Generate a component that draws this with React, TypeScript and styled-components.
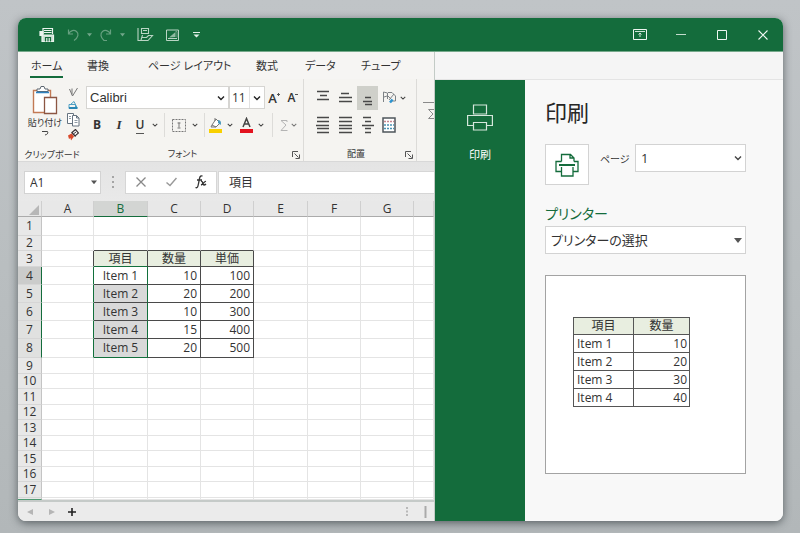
import React from "react";
import styled, { createGlobalStyle } from "styled-components";

const GREEN = "#146c3c";
const INK = "#333";

const GlobalStyle = createGlobalStyle`
  *, *::before, *::after { box-sizing: border-box; }
  body {
    margin: 0;
    font-family: "Open Sans", "Noto Sans CJK JP", sans-serif;
    font-feature-settings: "palt";
    color: ${INK};
  }
  button, select, input { font: inherit; font-feature-settings: inherit; color: inherit; margin: 0; }
  svg { display: block; flex: none; }
`;

const Desktop = styled.div`
  min-height: 100vh;
  padding: 18px 17px 12px 18px;
  background: linear-gradient(#c0c4c7, #b9bec0 50%, #b2b7b9);
`;

const AppWindow = styled.div`
  display: flex;
  flex-direction: column;
  border-radius: 8px;
  overflow: hidden;
  background: #f7f7f7;
  box-shadow: 0 2px 9px rgba(40, 48, 52, 0.65);
`;

const TitleBar = styled.header`
  display: flex;
  justify-content: space-between;
  height: 34px;
  padding-left: 16px;
  background: ${GREEN};
  border-bottom: 1px solid #76a98b;
  color: #e2efe7;
`;

const BarGroup = styled.div`
  display: flex;
`;

const IconButton = styled.button<{ $w: number; $active?: boolean; $dim?: boolean }>`
  display: flex;
  flex: none;
  align-items: center;
  justify-content: center;
  width: ${(p) => p.$w}px;
  height: 100%;
  padding: 0;
  border: 0;
  background: ${(p) => (p.$active ? "#cfd0ca" : "transparent")};
  opacity: ${(p) => (p.$dim ? 0.4 : 1)};
`;

const Body = styled.div`
  display: flex;
`;

const Workbook = styled.main`
  flex: 1 1 0;
  min-width: 0;
  display: flex;
  flex-direction: column;
  overflow: hidden;
  border-right: 1px solid #c3cbc6;
`;

const Tabs = styled.nav`
  display: grid;
  grid-template-columns: 56px 61px 108px 49px 56px auto;
  justify-content: start;
  height: 27px;
  padding-left: 12px;
  background: #f6f5f3;
`;

const Tab = styled.button<{ $active?: boolean }>`
  justify-self: start;
  height: 26px;
  padding: 3px 1px 0;
  border: 0;
  border-bottom: 2px solid ${(p) => (p.$active ? GREEN : "transparent")};
  background: none;
  font-size: 11px;
  line-height: 20px;
  white-space: nowrap;
`;

const Ribbon = styled.div`
  display: flex;
  height: 83px;
  background: #f5f4f1;
  border-bottom: 1px solid #d8d8d8;
  overflow: hidden;
`;

const Group = styled.section<{ $w: number; $rule?: boolean }>`
  position: relative;
  flex: none;
  display: flex;
  flex-direction: column;
  width: ${(p) => p.$w}px;
  padding-top: 7px;
  border-right: ${(p) => (p.$rule ? "1px solid #dcdbd8" : "0")};
`;

const Tools = styled.div<{ $h: number; $left?: number }>`
  display: flex;
  align-items: center;
  height: ${(p) => p.$h}px;
  padding-left: ${(p) => p.$left || 0}px;
`;

const GroupFooter = styled.div<{ $shift?: number }>`
  display: flex;
  align-items: center;
  justify-content: center;
  height: 14px;
  margin-top: 6px;
  padding-right: ${(p) => p.$shift || 0}px;
  font-size: 9px;
  line-height: 14px;
  white-space: nowrap;
`;

const Launcher = styled.button`
  position: absolute;
  right: 3px;
  bottom: 2px;
  padding: 0;
  border: 0;
  background: none;
`;

const Rule = styled.span<{ $w: number }>`
  display: flex;
  flex: none;
  justify-content: center;
  width: ${(p) => p.$w}px;
  &::before { content: ""; width: 1px; height: 24px; background: #dddcd9; }
`;

const Glyph = styled.span<{ $size?: number; $bold?: boolean; $italic?: boolean; $under?: boolean }>`
  font-size: ${(p) => p.$size || 12}px;
  line-height: 16px;
  font-weight: ${(p) => (p.$bold ? 700 : 600)};
  font-style: ${(p) => (p.$italic ? "italic" : "normal")};
  font-family: ${(p) => (p.$italic ? '"Liberation Serif", serif' : "inherit")};
  border-bottom: ${(p) => (p.$under ? "1px solid #555" : "0")};
`;

const PasteButton = styled.button`
  display: flex;
  flex-direction: column;
  align-items: center;
  width: 34px;
  padding: 0;
  border: 0;
  background: none;
  font-size: 9px;
  line-height: 14px;
  white-space: nowrap;
`;

const ClipboardTools = styled.div`
  display: flex;
  height: 56px;
  padding-left: 10px;
`;

const SmallStack = styled.div`
  display: grid;
  grid-template-rows: 12px 14px 16px 14px;
  width: 22px;
`;

const SelectBox = styled.span<{ $w?: string; $h: number; $line: string; $size: number }>`
  position: relative;
  display: flex;
  flex: ${(p) => (p.$w ? "none" : "1")};
  min-width: 0;
  width: ${(p) => p.$w || "auto"};
  height: ${(p) => p.$h}px;
  border: 1px solid ${(p) => p.$line};
  background: #fff;
  font-size: ${(p) => p.$size}px;
  & > select {
    width: 100%;
    padding: 0 0 0 5px;
    border: 0;
    appearance: none;
    background: transparent;
  }
  & > svg { position: absolute; right: 3px; top: 50%; translate: 0 -50%; pointer-events: none; }
`;

const LatinSelectBox = styled(SelectBox)`
  font-family: "Liberation Sans", sans-serif;
  & > select { padding-left: 3px; }
`;

const SizeSelectBox = styled(SelectBox)`
  & > select { padding-left: 2px; }
  &::after { content: ""; position: absolute; right: 14px; top: 0; bottom: 0; width: 1px; background: #e2e2e2; }
`;

const FormulaBar = styled.div`
  display: flex;
  align-items: center;
  height: 39px;
  padding: 1px 0 0 6px;
  background: linear-gradient(#e4e4e4, #e9e9e9);
`;

const FormulaTools = styled.div`
  display: flex;
  flex: none;
  width: 92px;
  height: 23px;
  border: 1px solid #d6d6d6;
  background: #fff;
`;

const DotsSlot = styled.span`
  display: flex;
  flex: none;
  justify-content: center;
  width: 24px;
`;

const FormulaInput = styled.input`
  flex: 1;
  min-width: 0;
  height: 23px;
  margin-left: 1px;
  padding: 0 10px;
  border: 1px solid #d6d6d6;
  border-right: 0;
  background: #fff;
  font-size: 12px;
`;

const SheetViewport = styled.div`
  overflow: hidden;
  background: #fff;
`;

const Sheet = styled.table`
  width: 100%;
  table-layout: fixed;
  border-collapse: separate;
  border-spacing: 0;
  font-size: 12px;
  line-height: 14px;
`;

const SheetRow = styled.tr<{ $h: number }>`
  height: ${(p) => p.$h}px;
`;

const Col = styled.col<{ $w?: number }>`
  width: ${(p) => (p.$w ? `${p.$w}px` : "auto")};
`;

const ColHead = styled.th<{ $on?: boolean }>`
  padding: 1px 0 0;
  font-weight: 400;
  color: ${(p) => (p.$on ? GREEN : INK)};
  background: ${(p) => (p.$on ? "#d3d5d3" : "#e8e8e8")};
  border-right: 1px solid #cfcfcf;
  border-bottom: 1px solid ${(p) => (p.$on ? GREEN : "#ababab")};
`;

const Corner = styled(ColHead)`
  & > svg { margin: 2px 2px 0 auto; }
`;

const RowHead = styled.th<{ $on?: boolean; $current?: boolean; $end?: boolean }>`
  padding: 0;
  font-weight: 400;
  background: ${(p) => (p.$current ? "#cbcccb" : p.$on ? "#e0e1e0" : "#e8e8e8")};
  border-right: 1px solid ${(p) => (p.$on ? GREEN : "#c4c4c4")};
  border-bottom: 1px solid ${(p) => (p.$end ? "#4f9a72" : "#d6d6d6")};
`;

const lineColor = { none: "#e4e4e4", dark: "#4a4a4a", green: "#12703c" };
type Line = keyof typeof lineColor;

const Cell = styled.td<{ $right: Line; $bottom: Line; $fill: string; $align: string }>`
  padding: 0 3px;
  text-align: ${(p) => p.$align};
  white-space: nowrap;
  background: ${(p) => p.$fill};
  border-right: 1px solid ${(p) => lineColor[p.$right]};
  border-bottom: 1px solid ${(p) => lineColor[p.$bottom]};
`;

const SheetTabs = styled.footer`
  display: flex;
  align-items: center;
  height: 21px;
  padding: 0 0 0 1px;
  background: #ebebeb;
  border-top: 2px solid #c5cac8;
`;

const Spacer = styled.span`
  flex: 1;
`;

const Side = styled.div`
  flex: 0 1 348px;
  display: flex;
  flex-direction: column;
`;

const SideTop = styled.div`
  height: 28px;
  background: #f5f5f5;
  border-bottom: 1px solid #e4e4e4;
`;

const SideBody = styled.div`
  flex: 1;
  display: flex;
`;

const Backstage = styled.nav`
  flex: 0 0 90px;
  background: ${GREEN};
`;

const BackstageItem = styled.button`
  display: flex;
  flex-direction: column;
  align-items: center;
  gap: 15px;
  width: 100%;
  padding: 24px 0 0;
  border: 0;
  background: none;
  color: #fff;
  font-size: 11px;
  line-height: 16px;
`;

const PrintPane = styled.section`
  flex: 1;
  min-width: 0;
  padding: 16px 37px 0 20px;
  background: #f8f8f8;
`;

const PaneTitle = styled.h1`
  margin: 0;
  font-size: 22px;
  font-weight: 400;
  line-height: 32px;
  color: #262626;
`;

const PrintRow = styled.div`
  display: flex;
  align-items: flex-start;
  margin-top: 16px;
`;

const PrintButton = styled.button`
  display: flex;
  align-items: center;
  justify-content: center;
  width: 44px;
  height: 41px;
  padding: 0;
  border: 1px solid #d3d3d3;
  background: #fff;
`;

const PageLabel = styled.label`
  width: 46px;
  padding-left: 11px;
  font-size: 10px;
  line-height: 30px;
  white-space: nowrap;
`;

const PrinterLabel = styled.label`
  display: block;
  margin-top: 16px;
  font-size: 14px;
  line-height: 25px;
  color: ${GREEN};
`;

const Preview = styled.div`
  margin-top: 21px;
  height: 199px;
  padding: 41px 55px 0 27px;
  border: 1px solid #a3a3a3;
  background: #fff;
`;

const PreviewTable = styled.table`
  width: 100%;
  table-layout: fixed;
  border-collapse: separate;
  border-spacing: 0;
  border-top: 1px solid #555;
  border-left: 1px solid #555;
  font-size: 12px;
  line-height: 14px;
  & thead tr { height: 17px; }
  & tbody tr { height: 18px; }
  & th { background: #e8eee0; font-weight: 400; padding: 0; }
  & th:first-child { width: 60px; }
  & td, & th { border-right: 1px solid #555; border-bottom: 1px solid #555; }
  & td { padding: 0 2px 0 3px; }
  & td + td { text-align: right; }
`;

const Chevron = ({ size = 7, color = "#444" }: { size?: number; color?: string }) => (
  <svg width={size} height={size} viewBox="0 0 8 8" fill="none" stroke={color} strokeWidth="1.4">
    <path d="M1 2.5 4 5.5 7 2.5" />
  </svg>
);

const Triangle = ({ w = 8, color = "#555" }: { w?: number; color?: string }) => (
  <svg width={w} height={w} viewBox="0 0 8 8" fill={color}>
    <path d="M0 2h8L4 7z" />
  </svg>
);

const Lines = ({ rows }: { rows: [number, number, number][] }) => (
  <svg width="16" height="18" viewBox="0 0 16 18" stroke="#484848" strokeWidth="1.4">
    {rows.map(([a, b, y]) => (
      <path key={y} d={`M${a} ${y}H${b}`} />
    ))}
  </svg>
);

const LauncherIcon = () => (
  <svg width="8" height="8" viewBox="0 0 8 8" fill="none" stroke="#555">
    <path d="M.5 6V.5H6M2.5 2.5l4 4M7.5 3.500v4h-4" />
  </svg>
);

const VerticalDots = () => (
  <svg width="3" height="12" viewBox="0 0 3 12" fill="#a5a5a5">
    <path d="M0 0h2v2H0zM0 5h2v2H0zM0 10h2v2H0z" />
  </svg>
);

const SplitDots = () => (
  <svg width="3" height="9" viewBox="0 0 3 9" fill="#b9b9b9">
    <path d="M0 0h2v2H0zM0 3.500h2v2H0zM0 7h2v2H0z" />
  </svg>
);

const QuickAccess = () => (
  <BarGroup>
    <IconButton $w={26} aria-label="印刷">
      <svg width="16" height="16" viewBox="0 0 16 16" fill="none" stroke="#eaf4ee" strokeWidth="1.2">
        <path d="M4 7V1.500h9.500V7M5 3.500h7.500M5 5.500h7.500" />
        <path d="M1 4.500h3v4H1z" fill="#eaf4ee" />
        <path d="M3 8h11.500v6.500H3z" fill="#cfe3d7" />
        <path d="M6.500 14.500v-4h5v4M9 10.500v4" stroke={GREEN} />
      </svg>
    </IconButton>
    <IconButton $w={26} $dim aria-label="元に戻す">
      <svg width="13" height="14" viewBox="0 0 13 14" fill="none" stroke="currentColor" strokeWidth="1.200">
        <path d="M1.500 1.500v4.500H6M1.500 6C3.500 2.500 7 1.500 9.500 3.500s2 6-2.500 9" />
      </svg>
    </IconButton>
    <IconButton $w={6} $dim aria-label="元に戻す一覧"><Triangle w={5} color="#fff" /></IconButton>
    <IconButton $w={26} $dim aria-label="やり直し">
      <svg width="13" height="14" viewBox="0 0 13 14" fill="none" stroke="currentColor" strokeWidth="1.200">
        <path d="M11.500 1.500v4.500H7M11.500 6C9.500 2.500 6 1.500 3.500 3.500s-2 6 1.500 9h3" />
      </svg>
    </IconButton>
    <IconButton $w={8} $dim aria-label="やり直し一覧"><Triangle w={5} color="#fff" /></IconButton>
    <IconButton $w={38} aria-label="プレビュー">
      <svg width="17" height="15" viewBox="0 0 17 15" fill="none" stroke="#b9d5c4" strokeWidth="1.100">
        <path d="M1 1v12.500h10l4.500-5h-4l-2 2H5M4.500 1.500h7v5h-7zM4 13l1.500-5" />
        <path d="M6 3.500h4" />
      </svg>
    </IconButton>
    <IconButton $w={16} aria-label="画像">
      <svg width="13" height="12" viewBox="0 0 13 12" fill="none" stroke="#b9d5c4">
        <path d="M.5 1h12v10.500H.5zM2 9.500h9" />
        <path d="M3 8.500 9.500 3v5z" fill="#8fbaa0" stroke="none" />
        <path d="M9.500 2.500h1.500v6" stroke="#6ea284" />
      </svg>
    </IconButton>
    <IconButton $w={32} aria-label="カスタマイズ">
      <svg width="7" height="6" viewBox="0 0 7 6" fill="#e2efe7">
        <path d="M0 0h7v1H0zM.5 2.500h6L3.500 5.500z" />
      </svg>
    </IconButton>
  </BarGroup>
);

const WindowControls = () => (
  <BarGroup>
    <IconButton $w={41} aria-label="リボンの表示">
      <svg width="14" height="11" viewBox="0 0 14 11" fill="none" stroke="#cfe3d7">
        <path d="M.5 .5h13v10H.5z" stroke="#eef6f1" />
        <path d="M2 2.500h10M7 8V4M5.500 5.500 7 4l1.500 1.500" />
      </svg>
    </IconButton>
    <IconButton $w={41} aria-label="最小化">
      <svg width="10" height="3" viewBox="0 0 10 3" stroke="#c4dccd"><path d="M0 1.500h10" /></svg>
    </IconButton>
    <IconButton $w={41} aria-label="最大化">
      <svg width="10" height="10" viewBox="0 0 10 10" fill="none" stroke="#eef6f1"><path d="M.5 .5h9v9h-9z" /></svg>
    </IconButton>
    <IconButton $w={41} aria-label="閉じる">
      <svg width="10" height="10" viewBox="0 0 10 10" stroke="#eef6f1" strokeWidth="1.100"><path d="m.5 .5 9 9M9.500 .5l-9 9" /></svg>
    </IconButton>
  </BarGroup>
);

const ClipboardGroup = () => (
  <Group $w={68}>
    <ClipboardTools>
      <PasteButton>
        <svg width="26" height="30" viewBox="0 0 26 30" fill="none">
          <path d="M1.500 4.500h17v22h-17z" fill="#fff" stroke="#c27a55" strokeWidth="1.400" />
          <path d="M5 5.500V3h3l1-2.500h3L13 3h3v2.500z" fill="#fff" stroke="#5c6670" />
          <path d="M4 6.500h13" stroke="#2f82c0" strokeWidth="1.400" />
          <path d="M12.500 11.500h12v16h-12z" fill="#fff" stroke="#8c5643" strokeWidth="1.300" />
        </svg>
        貼り付け
        <svg width="8" height="6" viewBox="0 0 8 6" fill="none" stroke="#444"><path d="M1 1.500h5.500c1 2-.5 3-2.500 3.500" /></svg>
      </PasteButton>
      <SmallStack>
        <IconButton $w={22} aria-label="切り取り">
          <svg width="9" height="9" viewBox="0 0 9 9" fill="none" stroke="#777"><path d="M.5 1 3.500 8 8.500 0M3 .5v6" /></svg>
        </IconButton>
        <IconButton $w={22} aria-label="貼り付けオプション">
          <svg width="10" height="9" viewBox="0 0 10 9" fill="none" stroke="#4fa0c4">
            <path d="M1 3.500h6.500v4H1zM3 3 6 .5l3 6" /><path d="M1 7h8.500" stroke="#2a87b5" strokeWidth="2" />
          </svg>
        </IconButton>
        <IconButton $w={22} aria-label="コピー">
          <svg width="13" height="14" viewBox="0 0 13 14" fill="#fff" stroke="#667380">
            <path d="M.5 .5h6v10h-6z" /><path d="M5.500 2.500h4l2.500 2.500v8H5.500zM9.500 2.500V5H12" /><path d="M7.500 7.500h3M7.500 9.500h3M2 3.500h2M2 5.500h2" stroke="#8f9aa5" />
          </svg>
        </IconButton>
        <IconButton $w={22} aria-label="書式のコピー">
          <svg width="12" height="12" viewBox="0 0 12 12" fill="none">
            <path d="M5 3.500 8.500 .5 11.500 4 8 7z" fill="#fff" stroke="#3b3033" strokeWidth="1.200" />
            <path d="m4.500 4 4 3.500M7 4.500l2-1.500" stroke="#3b3033" />
            <path d="M1 6.500 4.500 4.500 7 7.500 4 11.500l-.5-2.500-1.500 1z" fill="#d94a2c" />
          </svg>
        </IconButton>
      </SmallStack>
    </ClipboardTools>
    <GroupFooter>クリップボード</GroupFooter>
  </Group>
);

const FontGroup = () => (
  <Group $w={218} $rule>
    <Tools $h={24}>
      <LatinSelectBox $w="143px" $h={23} $line="#d6d5d2" $size={13}>
        <select aria-label="フォント名"><option>Calibri</option></select>
        <Chevron size={8} color="#222" />
      </LatinSelectBox>
      <SizeSelectBox $w="36px" $h={23} $line="#d6d5d2" $size={12}>
        <select aria-label="フォント サイズ"><option>11</option></select>
        <Chevron size={8} color="#222" />
      </SizeSelectBox>
      <IconButton $w={19} aria-label="拡大">
        <Glyph $size={13}>A</Glyph>
        <svg width="4" height="12" viewBox="0 0 4 12" stroke="#555"><path d="M0 2.500h3M1.500 1v3" /></svg>
      </IconButton>
      <IconButton $w={19} aria-label="縮小">
        <Glyph $size={12}>A</Glyph>
        <svg width="4" height="12" viewBox="0 0 4 12" stroke="#555"><path d="M0 2.500h3" /></svg>
      </IconButton>
    </Tools>
    <Tools $h={32}>
      <IconButton $w={22} aria-label="太字"><Glyph $bold $size={12}>B</Glyph></IconButton>
      <IconButton $w={22} aria-label="斜体"><Glyph $italic $size={13}>I</Glyph></IconButton>
      <IconButton $w={20} aria-label="下線"><Glyph $under $size={12}>U</Glyph></IconButton>
      <IconButton $w={10} aria-label="下線の種類"><Chevron size={6} /></IconButton>
      <Rule $w={9} />
      <IconButton $w={20} aria-label="罫線">
        <svg width="14" height="13" viewBox="0 0 14 13" fill="none" stroke="#777">
          <path d="M.5 .5h13v12H.5z" strokeDasharray="2 1" /><path d="M7 3.500v5M5.500 4h3M5.500 9h3" />
        </svg>
      </IconButton>
      <IconButton $w={12} aria-label="罫線の種類"><Chevron size={6} /></IconButton>
      <Rule $w={7} />
      <IconButton $w={16} aria-label="塗りつぶし">
        <svg width="14" height="16" viewBox="0 0 14 16" fill="none">
          <path d="M3 8 7 2l4 4-4 4z" fill="#fff" stroke="#777" /><path d="M6 4V1M3 8l-1 2h5" stroke="#777" />
          <path d="M9 3c3 0 3.500 3 2.500 5L9 6z" fill="#4796ba" /><path d="M0 12h13v4H0z" fill="#f8d000" />
        </svg>
      </IconButton>
      <IconButton $w={12} aria-label="塗りつぶしの色"><Chevron size={6} /></IconButton>
      <IconButton $w={20} aria-label="文字色">
        <svg width="13" height="16" viewBox="0 0 13 16" fill="none">
          <path d="M3 10 6.500 1.500 10 10M4.500 7h4" stroke="#444" strokeWidth="1.500" /><path d="M0 12h13v4H0z" fill="#e3131f" />
        </svg>
      </IconButton>
      <IconButton $w={9} aria-label="文字色の一覧"><Chevron size={6} /></IconButton>
      <Rule $w={14} />
      <IconButton $w={9} aria-label="合計">
        <svg width="8" height="11" viewBox="0 0 8 11" fill="none" stroke="#b4b4b4"><path d="M7 2V.5H1L6 5 1 10.500h6.500" /></svg>
      </IconButton>
      <IconButton $w={12} aria-label="合計の種類"><Chevron size={6} color="#777" /></IconButton>
    </Tools>
    <GroupFooter $shift={24}>フォント</GroupFooter>
    <Launcher aria-label="フォントの設定"><LauncherIcon /></Launcher>
  </Group>
);

const AlignGroup = () => (
  <Group $w={113} $rule>
    <Tools $h={24} $left={9}>
      <IconButton $w={20} aria-label="上揃え"><Lines rows={[[2, 14, 2.500], [5, 12, 6.500], [2, 14, 10.500]]} /></IconButton>
      <IconButton $w={24} aria-label="中央揃え"><Lines rows={[[4, 12, 4.500], [2, 15, 8.500], [2, 15, 12.500]]} /></IconButton>
      <IconButton $w={21} $active aria-label="下揃え"><Lines rows={[[5, 11, 8.500], [3, 12, 12.500], [5, 12, 15.500]]} /></IconButton>
      <IconButton $w={22} aria-label="方向">
        <svg width="13" height="13" viewBox="0 0 13 13" fill="none" stroke="#7d8286">
          <path d="M.5 11V1l4 1v6M1 6l3-1M5 1.500h4L12.500 5v5H9M6 9l5-6M5 5l3 3" /><path d="m7 11.500 2.500-3" stroke="#2b93cf" strokeWidth="2.500" />
        </svg>
      </IconButton>
      <IconButton $w={6} aria-label="方向の一覧"><Chevron size={6} /></IconButton>
    </Tools>
    <Tools $h={32} $left={9}>
      <IconButton $w={20} aria-label="左揃え"><Lines rows={[[2, 14, 1.500], [2, 14, 5.500], [1, 14, 9.500], [2, 14, 12.500], [2, 14, 16.500]]} /></IconButton>
      <IconButton $w={24} aria-label="横中央揃え"><Lines rows={[[2, 15, 1.500], [2, 15, 5.500], [2, 15, 9.500], [2, 15, 12.500], [2, 15, 16.500]]} /></IconButton>
      <IconButton $w={21} aria-label="右揃え"><Lines rows={[[3, 11, 1.500], [5, 11, 5.500], [2, 14, 9.500], [5, 11, 12.500], [5, 11, 16.500]]} /></IconButton>
      <IconButton $w={22} aria-label="セルの結合">
        <svg width="14" height="16" viewBox="0 0 14 16" fill="none">
          <path d="M1 1h12v14H1z" fill="#fff" stroke="#4e555b" strokeWidth="1.500" />
          <path d="M2 4.500h10" stroke="#c78790" strokeWidth="1.500" strokeDasharray="2 1" /><path d="M2 8h10M2 11.500h10" stroke="#4a93b4" strokeWidth="1.500" strokeDasharray="2 1" />
        </svg>
      </IconButton>
    </Tools>
    <GroupFooter $shift={8}>配置</GroupFooter>
    <Launcher aria-label="配置の設定"><LauncherIcon /></Launcher>
  </Group>
);

const SumGroup = () => (
  <Group $w={30}>
    <Tools $h={56} $left={6}>
      <IconButton $w={18} aria-label="集計">
        <svg width="18" height="24" viewBox="0 0 18 24" fill="none" stroke="#8a8a8a">
          <path d="M0 .5h18" /><path d="M12 9V7.500H5.500L10 12l-4.500 4.500H12V15" />
        </svg>
      </IconButton>
    </Tools>
  </Group>
);

const columns = ["A", "B", "C", "D", "E", "F", "G", ""];
const columnWidths = [24, 52, 54, 53, 53, 54, 53, 53];
const rowHeights = [19, 15, 16, 18, 18, 18, 18, 19, 16, 15, 16, 15, 16, 15, 16, 15, 16];
const records: Record<number, string[]> = {
  3: ["項目", "数量", "単価"],
  4: ["Item 1", "10", "100"],
  5: ["Item 2", "20", "200"],
  6: ["Item 3", "10", "300"],
  7: ["Item 4", "15", "400"],
  8: ["Item 5", "20", "500"],
};

function cellLook(row: number, col: number) {
  const inTable = row >= 3 && row <= 8 && col >= 1 && col <= 3;
  const selected = row >= 4 && row <= 8;
  let right: Line = "none";
  let bottom: Line = "none";
  if (inTable) right = bottom = "dark";
  if (row === 2 && col >= 1 && col <= 3) bottom = "dark";
  if (row >= 3 && row <= 8 && col === 0) right = selected ? "green" : "dark";
  if (selected && col === 1) right = "green";
  if (col === 1 && (row === 3 || row === 8)) bottom = "green";
  let fill = "#fff";
  if (inTable && row === 3) fill = "#e8eee0";
  if (col === 1 && row >= 5 && row <= 8) fill = "#d9d9d9";
  return { $right: right, $bottom: bottom, $fill: fill, $align: row === 3 || col === 1 ? "center" : "right" };
}

const Grid = () => (
  <SheetViewport>
    <Sheet>
      <colgroup>
        {columnWidths.map((w, i) => <Col key={i} $w={w} />)}
        <Col />
      </colgroup>
      <thead>
        <SheetRow $h={16}>
          <Corner aria-label="すべて選択">
            <svg width="10" height="10" viewBox="0 0 10 10" fill="#b7b7b7"><path d="M10 0v10H0z" /></svg>
          </Corner>
          {columns.map((c) => <ColHead key={c} $on={c === "B"}>{c}</ColHead>)}
        </SheetRow>
      </thead>
      <tbody>
        {rowHeights.map((h, i) => {
          const row = i + 1;
          return (
            <SheetRow key={row} $h={h}>
              <RowHead $on={row >= 4 && row <= 8} $current={row === 4}>{row}</RowHead>
              {columns.map((c, col) => (
                <Cell key={c} {...cellLook(row, col)}>{records[row]?.[col - 1]}</Cell>
              ))}
            </SheetRow>
          );
        })}
        <SheetRow $h={2}>
          <RowHead $end />
          {columns.map((c, col) => <Cell key={c} {...cellLook(18, col)} />)}
        </SheetRow>
      </tbody>
    </Sheet>
  </SheetViewport>
);

const previewRows = [["Item 1", "10"], ["Item 2", "20"], ["Item 3", "30"], ["Item 4", "40"]];

const PrintPanel = () => (
  <Side>
    <SideTop />
    <SideBody>
      <Backstage>
        <BackstageItem>
          <svg width="26" height="28" viewBox="0 0 26 28" fill="none" stroke="#d5e7dc" strokeWidth="1.200">
            <path d="M6.500 1h13v9h-13zM6 21.500H.6V11.500h24.800v10H20" /><path d="M6.500 18.500h13V26h-13z" />
          </svg>
          印刷
        </BackstageItem>
      </Backstage>
      <PrintPane>
        <PaneTitle>印刷</PaneTitle>
        <PrintRow>
          <PrintButton aria-label="印刷">
            <svg width="24" height="24" viewBox="0 0 24 24" fill="none" stroke={GREEN} strokeWidth="1.300">
              <path d="M6.500 8.500V1.500h9L19 5v3.500M15 1.500V5h4" /><path d="M6 18.500H1V8.500h5.500M19 8.500h4v10h-5" />
              <path d="M6.500 14v9h11.500v-9" /><path d="M4 12h16" strokeWidth="1.800" />
            </svg>
          </PrintButton>
          <PageLabel htmlFor="page">ページ</PageLabel>
          <SelectBox $h={28} $line="#d3d3d3" $size={13}>
            <select id="page"><option>1</option></select>
            <Chevron size={8} />
          </SelectBox>
        </PrintRow>
        <PrinterLabel htmlFor="printer">プリンター</PrinterLabel>
        <SelectBox $w="100%" $h={28} $line="#d3d3d3" $size={13}>
          <select id="printer"><option>プリンターの選択</option></select>
          <Triangle />
        </SelectBox>
        <Preview>
          <PreviewTable>
            <thead><tr><th>項目</th><th>数量</th></tr></thead>
            <tbody>
              {previewRows.map(([name, n]) => <tr key={name}><td>{name}</td><td>{n}</td></tr>)}
            </tbody>
          </PreviewTable>
        </Preview>
      </PrintPane>
    </SideBody>
  </Side>
);

export default function App() {
  return (
    <>
      <GlobalStyle />
      <Desktop>
        <AppWindow>
          <TitleBar>
            <QuickAccess />
            <WindowControls />
          </TitleBar>
          <Body>
            <Workbook>
              <Tabs>
                <Tab $active>ホーム</Tab>
                <Tab>書換</Tab>
                <Tab>ページ レイアウト</Tab>
                <Tab>数式</Tab>
                <Tab>データ</Tab>
                <Tab>チュープ</Tab>
              </Tabs>
              <Ribbon>
                <ClipboardGroup />
                <FontGroup />
                <AlignGroup />
                <SumGroup />
              </Ribbon>
              <FormulaBar>
                <SelectBox $w="77px" $h={23} $line="#d3d3d3" $size={12}>
                  <select aria-label="名前ボックス"><option>A1</option></select>
                  <Triangle w={6} />
                </SelectBox>
                <DotsSlot><VerticalDots /></DotsSlot>
                <FormulaTools>
                  <IconButton $w={30} aria-label="キャンセル">
                    <svg width="10" height="10" viewBox="0 0 10 10" stroke="#888" strokeWidth="1.300"><path d="m.5 .5 9 9M9.500 .5l-9 9" /></svg>
                  </IconButton>
                  <IconButton $w={30} aria-label="入力">
                    <svg width="11" height="10" viewBox="0 0 11 10" fill="none" stroke="#999" strokeWidth="1.500"><path d="M.5 5.500 4 8.500 10.500 1" /></svg>
                  </IconButton>
                  <IconButton $w={30} aria-label="関数の挿入">
                    <svg width="12" height="14" viewBox="0 0 12 14" fill="none" stroke="#333" strokeWidth="1.300">
                      <path d="M.5 12.500c2 1 2.500-1 3-4l1-5C5 1 6 .5 7.500 1.200M2 5h5M6 6.500c2-1 1.500 3.500 3 3.500 1 0 1.500-.5 2-1M11 6.500c-1.500-.5-3 3-5 3.500" />
                    </svg>
                  </IconButton>
                </FormulaTools>
                <FormulaInput aria-label="数式バー" defaultValue="項目" />
              </FormulaBar>
              <Grid />
              <SheetTabs>
                <IconButton $w={22} aria-label="前のシート">
                  <svg width="6" height="6" viewBox="0 0 6 6" fill="#b5b5b5"><path d="M6 0v6L0 3z" /></svg>
                </IconButton>
                <IconButton $w={22} aria-label="次のシート">
                  <svg width="6" height="6" viewBox="0 0 6 6" fill="#b5b5b5"><path d="M0 0v6l6-3z" /></svg>
                </IconButton>
                <IconButton $w={18} aria-label="新しいシート">
                  <svg width="8" height="8" viewBox="0 0 8 8" stroke="#222" strokeWidth="1.600"><path d="M4 0v8M0 4h8" /></svg>
                </IconButton>
                <Spacer />
                <IconButton $w={18} aria-label="分割">
                  <SplitDots />
                </IconButton>
                <IconButton $w={18} aria-label="スクロール">
                  <svg width="5" height="12" viewBox="0 0 5 12" stroke="#aaa" strokeWidth="2"><path d="M2.500 0v12" /></svg>
                </IconButton>
              </SheetTabs>
            </Workbook>
            <PrintPanel />
          </Body>
        </AppWindow>
      </Desktop>
    </>
  );
}
